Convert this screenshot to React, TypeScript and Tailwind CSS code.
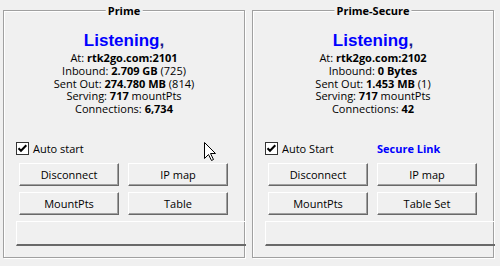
import React from "react";

const FONT = { fontFamily: '"Open Sans", "Liberation Sans", Arial, sans-serif' };
const BIG = { fontFamily: '"Liberation Sans", Arial, sans-serif' };

function Btn({ label }: { label: string }) {
  return (
    <div className="w-[100px] h-[23px] flex items-center justify-center bg-[#f0f0f0] border border-t-white border-l-white border-b-[#696969] border-r-[#696969] shadow-[inset_-1px_-1px_0_#a0a0a0] text-[11px] leading-[13px] text-black">
      {label}
    </div>
  );
}

function Check() {
  return (
    <div className="w-[13px] h-[13px] bg-white border border-[#333333] flex items-center justify-center">
      <svg width="11" height="11" viewBox="0 0 11 11">
        <path d="M1.5 5.2 L4 7.8 L9.3 2.2" fill="none" stroke="#000" strokeWidth="2" />
      </svg>
    </div>
  );
}

type Props = {
  title: string;
  port: string;
  inbound: React.ReactNode;
  sent: React.ReactNode;
  conns: string;
  autoLabel: string;
  secure?: boolean;
  table: string;
};

function Group({ title, port, inbound, sent, conns, autoLabel, secure, table }: Props) {
  return (
    <div className="relative w-[242px] h-[248px] border border-[#a0a0a0] shadow-[1px_1px_0_#ffffff,inset_1px_1px_0_#ffffff]">
      <div className="absolute left-1/2 -translate-x-1/2 top-[-7px] bg-[#f0f0f0] px-[2px] text-[11px] leading-[13px] font-bold text-black whitespace-nowrap">
        {title}
      </div>
      <div className="flex flex-col pt-[20px]">
        <div className="text-center text-[17px] leading-[20px] font-bold text-[#0000ff]" style={BIG}>
          Listening<span className="text-[#1a1a8c]">,</span>
        </div>
        <div className="mt-[1px] text-center text-[11px] leading-[12.75px] text-black">
          <div>
            At: <b>rtk2go.com:{port}</b>
          </div>
          <div>Inbound: {inbound}</div>
          <div>Sent Out: {sent}</div>
          <div>
            Serving: <b>717</b> mountPts
          </div>
          <div>
            Connections: <b>{conns}</b>
          </div>
        </div>
        <div className="mt-[26px] h-[13px] flex items-center pl-[12px]">
          <div className="w-[112px] flex items-center">
            <Check />
            <span className="ml-[4px] text-[11px] leading-[13px] text-black">{autoLabel}</span>
          </div>
          {secure && (
            <span className="text-[11px] leading-[13px] font-bold text-[#0000ff]">Secure Link</span>
          )}
        </div>
        <div className="mt-[8px] pl-[15px] grid grid-cols-[100px_100px] gap-x-[9px] gap-y-[6px]">
          <Btn label="Disconnect" />
          <Btn label="IP map" />
          <Btn label="MountPts" />
          <Btn label={table} />
        </div>
        <div className="mt-[6px] ml-[12px] mr-[-2px] h-[25px] border-t border-l border-white border-b-2 border-b-[#696969]" />
      </div>
    </div>
  );
}

export default function App() {
  return (
    <div className="relative w-[500px] h-[266px] bg-[#f0f0f0] overflow-hidden" style={FONT}>
      <div className="flex gap-[7px] pl-[3px] pt-[10px]">
        <Group
          title="Prime"
          port="2101"
          inbound={
            <>
              <b>2.709 GB</b> (725)
            </>
          }
          sent={
            <>
              <b>274.780 MB</b> (814)
            </>
          }
          conns="6,734"
          autoLabel="Auto start"
          table="Table"
        />
        <Group
          title="Prime-Secure"
          port="2102"
          inbound={<b>0 Bytes</b>}
          sent={
            <>
              <b>1.453 MB</b> (1)
            </>
          }
          conns="42"
          autoLabel="Auto Start"
          secure
          table="Table Set"
        />
      </div>
      <svg className="absolute left-[203px] top-[141px]" width="16" height="22" viewBox="0 0 16 22">
        <path
          d="M1.5 1.5 L1.5 17.5 L5.5 13.5 L8.5 19.5 L10.5 18.5 L7.5 12.5 L12.5 12.5 Z"
          fill="#ffffff"
          stroke="#000000"
          strokeWidth="1"
          strokeLinejoin="miter"
        />
      </svg>
    </div>
  );
}
